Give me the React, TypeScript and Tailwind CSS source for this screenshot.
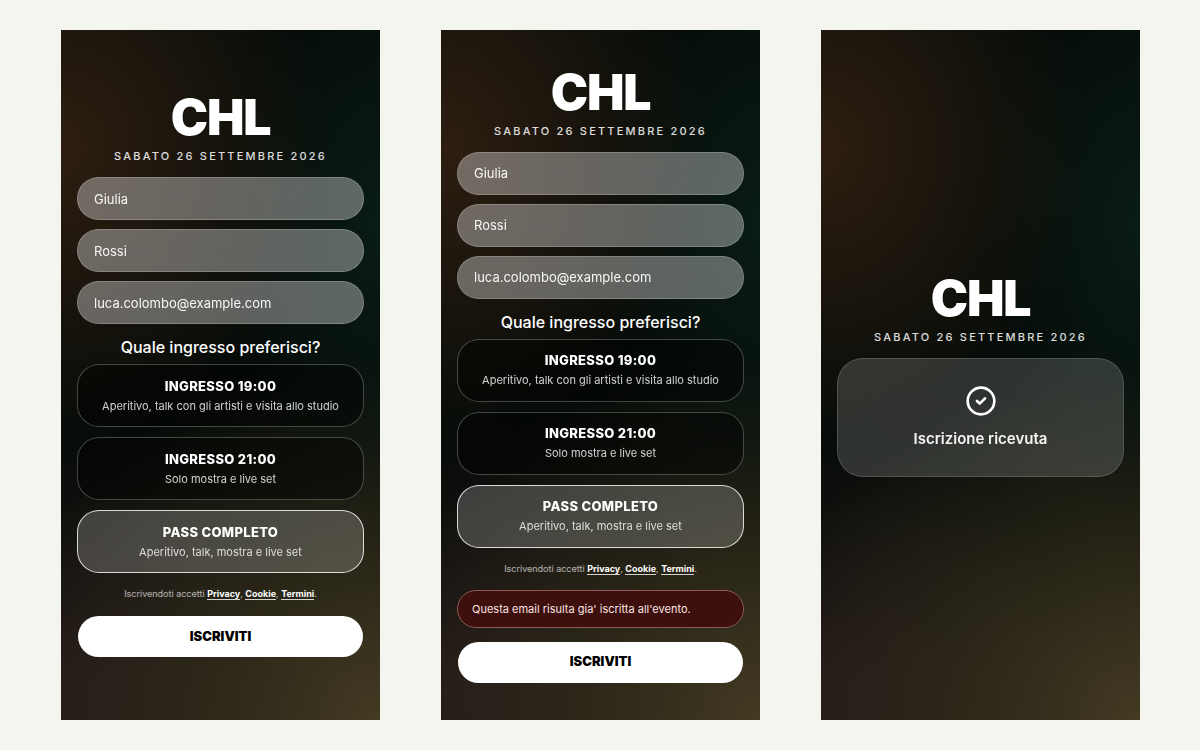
import React, { useState } from "react"
import { CircleCheck } from "lucide-react"

interface Ticket {
  id: string
  title: string
  description: string
}

const tickets: Ticket[] = [
  { id: "19", title: "INGRESSO 19:00", description: "Aperitivo, talk con gli artisti e visita allo studio" },
  { id: "21", title: "INGRESSO 21:00", description: "Solo mostra e live set" },
  { id: "full", title: "PASS COMPLETO", description: "Aperitivo, talk, mostra e live set" },
]

const fields = [
  { name: "firstName", label: "Nome", type: "text", value: "Giulia" },
  { name: "lastName", label: "Cognome", type: "text", value: "Rossi" },
  { name: "email", label: "Email", type: "email", value: "luca.colombo@example.com" },
]

const legalLinks = ["Privacy", "Cookie", "Termini"]

const Screen: React.FC<{ children: React.ReactNode }> = ({ children }) => (
  <section
    className="flex min-w-0 flex-col justify-center px-4 text-white bg-[#050b08]
              bg-[radial-gradient(ellipse_84%_44%_at_0%_17%,#2e1e11,transparent),radial-gradient(ellipse_50%_42%_at_100%_28%,#0a1b15,transparent),radial-gradient(ellipse_120%_54%_at_100%_100%,#443a23,transparent),radial-gradient(ellipse_80%_40%_at_0%_96%,#231918,transparent)]"
  >
    {children}
  </section>
)

const EventHeader: React.FC = () => (
  <header className="text-center">
    <h1 className="text-[50px] leading-[50px] font-black tracking-tight">CHL</h1>
    <p className="mt-1.5 text-[11px] leading-4 font-medium tracking-[0.2em] text-white/85">SABATO 26 SETTEMBRE 2026</p>
  </header>
)

interface FormProps {
  id: string
  error?: string
}

const SignupForm: React.FC<FormProps> = ({ id, error }) => {
  const [selected, setSelected] = useState<string>("full")

  return (
    <form className="mt-[13px] flex flex-col" onSubmit={(e) => e.preventDefault()}>
      <div className="flex flex-col gap-[9px]">
        {fields.map((field) => (
          <input
            key={field.name}
            type={field.type}
            name={field.name}
            aria-label={field.label}
            defaultValue={field.value}
            className="h-[43px] w-full rounded-full border border-white/20 bg-white/35 px-4 text-[13px] text-white/95 outline-none backdrop-blur-lg"
          />
        ))}
      </div>

      <fieldset className="mt-[11px]">
        <legend className="w-full text-center text-base leading-6 font-medium">Quale ingresso preferisci?</legend>
        <div className="mt-[5px] flex flex-col gap-2.5">
          {tickets.map((ticket) => (
            <label
              key={ticket.id}
              className="flex h-[63px] cursor-pointer flex-col items-center justify-center rounded-[22px] border
                        border-white/25 bg-black/40 text-center backdrop-blur-lg has-checked:border-white/80 has-checked:bg-white/20"
            >
              <input
                type="radio"
                name={`${id}-ticket`}
                value={ticket.id}
                checked={selected === ticket.id}
                onChange={() => setSelected(ticket.id)}
                className="sr-only"
              />
              <span className="text-[13px] leading-5 font-extrabold tracking-wide">{ticket.title}</span>
              <span className="text-[11px] leading-5 text-white/80">{ticket.description}</span>
            </label>
          ))}
        </div>
      </fieldset>

      <p className="mt-[13px] text-center text-[9px] leading-4 text-white/65">
        Iscrivendoti accetti{" "}
        {legalLinks.map((link, index) => (
          <React.Fragment key={link}>
            <a href="#" className="border-b border-white/80 font-bold text-white">
              {link}
            </a>
            {index < legalLinks.length - 1 ? ", " : "."}
          </React.Fragment>
        ))}
      </p>

      {error && (
        <p
          role="alert"
          className="mt-[13px] rounded-full border border-[#8a5a55] bg-[#3d100e] px-3.5 py-[9px] text-[11px] leading-[18px] text-[#fbe4e1]"
        >
          {error}
        </p>
      )}

      <button
        type="submit"
        className="mt-[13px] h-[43px] w-full rounded-full border border-transparent bg-white bg-clip-padding text-[13px] font-black text-black"
      >
        ISCRIVITI
      </button>
    </form>
  )
}

const Confirmation: React.FC = () => (
  <div
    role="status"
    className="mt-[13px] flex flex-col items-center rounded-[26px] border border-white/15 bg-white/16 px-4 pt-[26px] pb-[25px] backdrop-blur-xl"
  >
    <CircleCheck size={32} strokeWidth={2} />
    <p className="mt-2.5 text-[15px] leading-6 font-semibold text-white/95">Iscrizione ricevuta</p>
  </div>
)

const App: React.FC = () => {
  return (
    <main className="grid min-h-screen grid-cols-3 gap-[61px] bg-[#f5f5f0] py-[30px] pr-[60px] pl-[61px] font-['Inter',sans-serif]">
      <Screen>
        <EventHeader />
        <SignupForm id="signup" />
      </Screen>
      <Screen>
        <EventHeader />
        <SignupForm id="duplicate" error="Questa email risulta gia' iscritta all'evento." />
      </Screen>
      <Screen>
        <EventHeader />
        <Confirmation />
      </Screen>
    </main>
  )
}

export default App
